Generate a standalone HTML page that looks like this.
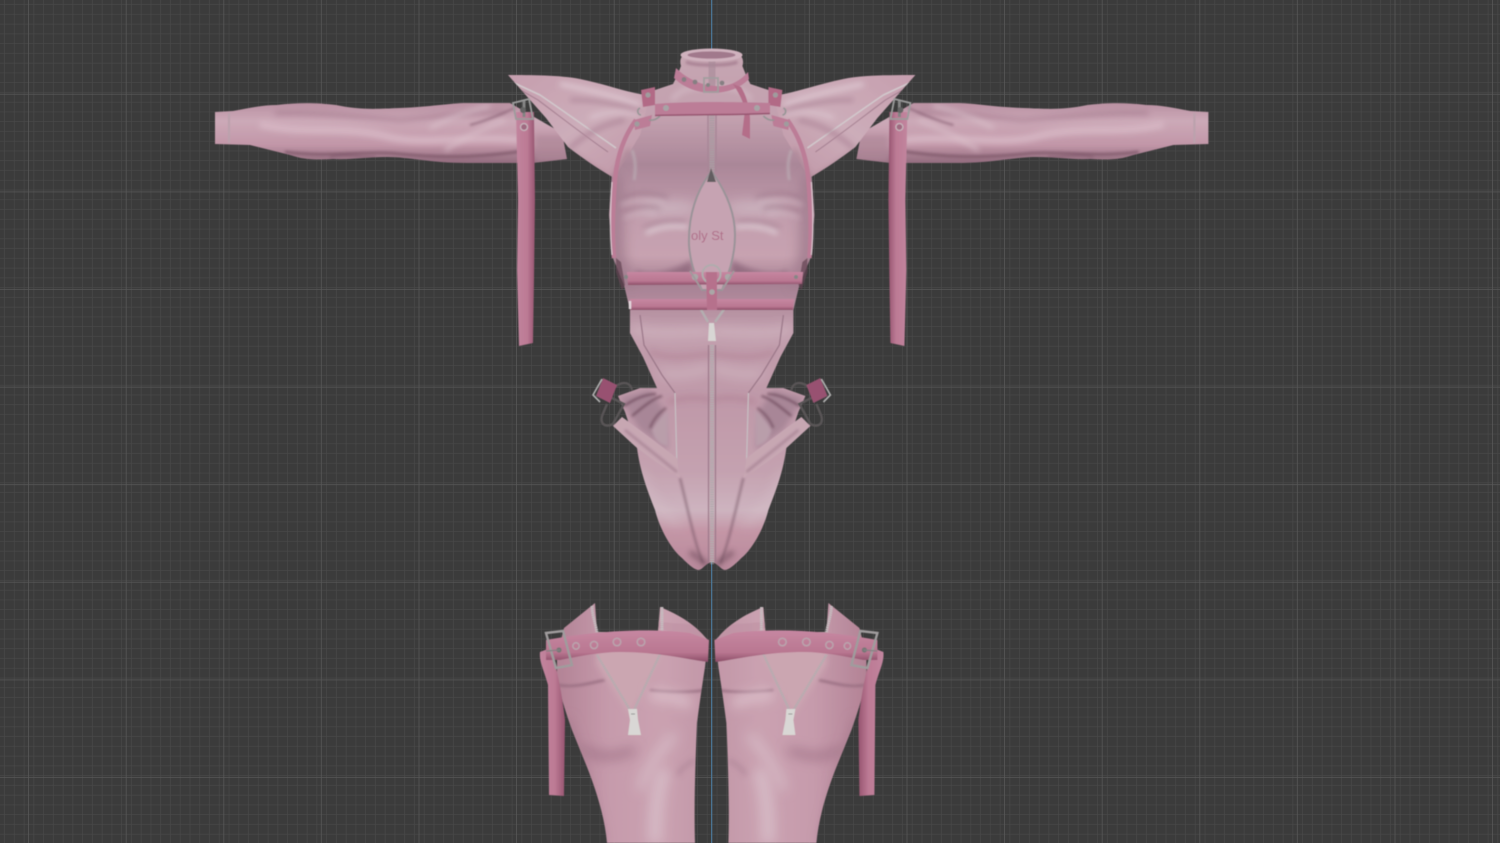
<!DOCTYPE html>
<html><head><meta charset="utf-8"><title>Viewport</title>
<style>html,body{margin:0;padding:0;background:#3b3b3b;width:1500px;height:843px;overflow:hidden}svg{display:block}</style></head>
<body>
<svg xmlns="http://www.w3.org/2000/svg" width="1500" height="843" viewBox="0 0 1500 843">
<defs>
<pattern id="gMinor" width="9.76" height="9.76" patternUnits="userSpaceOnUse" x="4.9" y="4.9"><path d="M9.76 0V9.76M0 9.76H9.76" stroke="#494949" stroke-width="1.300" fill="none"/></pattern>
<pattern id="gMajor" width="97.6" height="97.6" patternUnits="userSpaceOnUse" x="-68.6" y="-2.9"><path d="M97.6 0V97.6M0 97.6H97.6" stroke="#585858" stroke-width="1.500" fill="none"/></pattern>
<filter id="b1" filterUnits="userSpaceOnUse" x="0" y="0" width="1500" height="843"><feGaussianBlur stdDeviation="1.200"/></filter>
<filter id="b2" filterUnits="userSpaceOnUse" x="0" y="0" width="1500" height="843"><feGaussianBlur stdDeviation="2.800"/></filter>
<filter id="b3" filterUnits="userSpaceOnUse" x="0" y="0" width="1500" height="843"><feGaussianBlur stdDeviation="6"/></filter>
<filter id="soft" filterUnits="userSpaceOnUse" x="0" y="0" width="1500" height="843"><feGaussianBlur stdDeviation="0.6"/><feColorMatrix type="saturate" values="0.78"/><feComponentTransfer><feFuncR type="linear" slope="0.91"/><feFuncG type="linear" slope="0.91"/><feFuncB type="linear" slope="0.91"/></feComponentTransfer></filter>
<linearGradient id="armG" x1="0" y1="0" x2="0" y2="1"><stop offset="0" stop-color="#c994ab"/><stop offset=".3" stop-color="#dcaec1"/><stop offset=".7" stop-color="#d29ab1"/><stop offset="1" stop-color="#a06e86"/></linearGradient>
<linearGradient id="bodyG" gradientUnits="userSpaceOnUse" x1="0" y1="50" x2="0" y2="570">
  <stop offset="0" stop-color="#d6abbc"/><stop offset=".13" stop-color="#d2a5b8"/><stop offset=".22" stop-color="#b98ba2"/><stop offset=".32" stop-color="#d1a1b6"/><stop offset=".395" stop-color="#d8a7ba"/><stop offset=".45" stop-color="#b5849c"/><stop offset=".54" stop-color="#d1a2b6"/><stop offset=".68" stop-color="#cf9db2"/><stop offset=".81" stop-color="#d4a6b9"/><stop offset=".885" stop-color="#dcbac9"/><stop offset=".925" stop-color="#d599af"/><stop offset="1" stop-color="#c98ca4"/></linearGradient>
<linearGradient id="shG" x1="0" y1="0" x2="1" y2="1"><stop offset="0" stop-color="#d6a2b7"/><stop offset=".5" stop-color="#dcb2c3"/><stop offset="1" stop-color="#cf98ae"/></linearGradient>
<linearGradient id="bootG" x1="0" y1="0" x2="1" y2="0"><stop offset="0" stop-color="#c3859e"/><stop offset=".35" stop-color="#d79fb5"/><stop offset=".7" stop-color="#dba6ba"/><stop offset="1" stop-color="#d39bb1"/></linearGradient>
<linearGradient id="strapG" x1="0" y1="0" x2="1" y2="0"><stop offset="0" stop-color="#d585a8"/><stop offset=".6" stop-color="#cf7a9d"/><stop offset="1" stop-color="#a85278"/></linearGradient>
<linearGradient id="beltG" x1="0" y1="0" x2="0" y2="1"><stop offset="0" stop-color="#da88ab"/><stop offset=".7" stop-color="#cc7699"/><stop offset="1" stop-color="#9c4b6f"/></linearGradient>

<clipPath id="armC"><path d="M215,112 L233,111 C250,108 262,105 277,105 C300,102 320,103 336,105 C360,110 375,109 400,108 C430,107 450,103 467,103 L510,103 L562,133 L567,159 L533,163 L467,163 C430,163 410,157 387,157 C365,157 350,160 333,159 C315,160 305,160 290,155 L250,145 L215,144 Z"/></clipPath>
<clipPath id="shC"><path d="M508,75 C530,75 560,75 580,79 C605,84 625,92 650,96 L640,135 L614,178 C600,170 585,160 568,147 L546,118 Z"/></clipPath>
<clipPath id="bodyC"><path d="M712,50 L692,52 C681,53 679,60 681,66 L677,76 L673,84 L655,90 L640,96 L620,135 L612,172 L609,215 L613,258 L624,285 L630,310 L630,333 L643,357 L657,388 L640,388 L618,396 L625,412 L637,448 C640,470 646,487 655,510 C660,530 672,550 682,558 C690,566 695,570 699,570 C703,569 706,563 712,562 Z"/></clipPath>
<clipPath id="bootC"><path d="M595,603 L564,628 L557,655 L557,677 C560,695 565,710 572,730 L587,767 C598,795 605,820 607,843 L695,843 C694,810 695,770 697,723 C700,700 703,680 705,667 L708,640 L705,637 C695,625 680,615 660,607 L658,632 L597,632 Z"/></clipPath>

<g id="half">
  <!-- arm -->
  <path d="M215,112 L233,111 C250,108 262,105 277,105 C300,102 320,103 336,105 C360,110 375,109 400,108 C430,107 450,103 467,103 L510,103 L562,133 L567,159 L533,163 L467,163 C430,163 410,157 387,157 C365,157 350,160 333,159 C315,160 305,160 290,155 L250,145 L215,144 Z" fill="url(#armG)"/>
  <g clip-path="url(#armC)">
    <path d="M229,113V143" stroke="#c8a7b6" stroke-width="2.200" fill="none"/>
    <path d="M260,124 C300,135 340,125 385,136 C420,146 470,135 520,140" stroke="#e6bccd" stroke-width="7" fill="none" filter="url(#b2)"/>
    <path d="M275,113 C310,112 350,116 400,120 C430,118 460,112 505,112" stroke="#b37c96" stroke-width="4" fill="none" filter="url(#b2)" opacity=".7"/>
    <path d="M285,152 C330,158 370,150 400,154 C440,158 480,158 530,150" stroke="#8a5871" stroke-width="3" fill="none" filter="url(#b1)" opacity=".8"/>
    <path d="M430,128 C450,118 470,110 490,106 M445,150 C460,140 480,130 505,120" stroke="#e8c6d4" stroke-width="3" fill="none" filter="url(#b2)"/>
    <path d="M470,125 C490,120 505,112 515,108 M330,157 C345,153 355,157 375,157" stroke="#8a5771" stroke-width="2" fill="none" filter="url(#b1)" opacity=".65"/>
    <path d="M535,135 L568,135 L568,162 L535,163 Z" fill="#bc8aa0" opacity=".7" filter="url(#b2)"/>
  </g>
  <!-- body -->
  <path d="M712,50 L692,52 C681,53 679,60 681,66 L677,76 L673,84 L655,90 L640,96 L620,135 L612,172 L609,215 L613,258 L624,285 L630,310 L630,333 L643,357 L657,388 L640,388 L618,396 L625,412 L637,448 C640,470 646,487 655,510 C660,530 672,550 682,558 C690,566 695,570 699,570 C703,569 706,563 712,562 Z" fill="url(#bodyG)"/>
  <g clip-path="url(#bodyC)">
    <path d="M608,170 L622,180 L624,250 L632,290 L608,270 Z" fill="#a97a92" filter="url(#b3)" opacity=".8"/>
    <ellipse cx="668" cy="208" rx="30" ry="7" fill="#d9b9c8" filter="url(#b3)"/>
    <path d="M622,199 C632,192 650,192 668,197 M624,212 C636,206 650,206 660,208" stroke="#a07189" stroke-width="2.500" fill="none" filter="url(#b2)" opacity=".75"/>
    <path d="M621,205 C632,199 650,199 664,203 M624,218 C634,212 646,212 656,214" stroke="#e6cbd7" stroke-width="2.500" fill="none" filter="url(#b2)" opacity=".7"/>
    <path d="M644,228 C656,222 672,220 686,222" stroke="#9a6a83" stroke-width="2.500" fill="none" filter="url(#b2)" opacity=".6"/>
    <path d="M646,233 C658,227 672,225 688,227" stroke="#eedde5" stroke-width="3.500" fill="none" filter="url(#b2)"/>
    <path d="M636,270 C650,278 675,270 692,260 L692,276 L636,278 Z" fill="#a1708a" filter="url(#b2)"/>
    <path d="M686,62 C695,66 730,66 738,62" stroke="#b5829a" stroke-width="3" fill="none" filter="url(#b1)"/>
    <path d="M672,100 C680,88 695,86 712,88" stroke="#e4c5d2" stroke-width="3" fill="none" filter="url(#b2)"/>
    <path d="M632,328 C660,338 690,330 712,332 M660,372 C675,378 695,372 712,368" stroke="#e4c5d2" stroke-width="5" fill="none" filter="url(#b3)"/>
    <path d="M650,352 C670,360 690,356 712,354 M668,402 C685,397 700,397 712,400" stroke="#bf7f9a" stroke-width="6" fill="none" filter="url(#b2)" opacity=".45"/>
    <path d="M640,315 L644,345 L662,375 L675,393" stroke="#a97c92" stroke-width="1.300" fill="none"/>
    <path d="M632,150 C636,160 636,170 634,180" stroke="#c9c0c4" stroke-width="1.500" fill="none" filter="url(#b1)"/>
    <!-- gusset -->
    <path d="M620,398 L650,390 L664,410 L668,450 L640,430 Z" fill="#b68aa0" filter="url(#b2)"/>
    <path d="M624,406 C636,398 646,394 656,394 M632,416 C644,406 654,398 662,396" stroke="#7d4f66" stroke-width="2" fill="none" filter="url(#b1)" opacity=".9"/>
    <path d="M652,430 C656,422 664,414 668,410 L668,446 C660,445 654,440 652,430 Z" fill="#c7a3b4" filter="url(#b1)"/>
    <path d="M650,428 C654,418 660,412 666,408" stroke="#7d4f66" stroke-width="2" fill="none" filter="url(#b1)" opacity=".8"/>
    <path d="M680,478 C688,510 695,545 703,563" stroke="#7b5268" stroke-width="1.800" fill="none" filter="url(#b1)" opacity=".7"/>
    <path d="M675,393 L677,468" stroke="#d2c7cc" stroke-width="1.200" fill="none"/>
    <path d="M690,552 C696,556 702,560 708,566" stroke="#6f4459" stroke-width="5" fill="none" filter="url(#b2)" opacity=".6"/>
    <path d="M640,470 C650,505 660,510 680,525" stroke="#e9d3dd" stroke-width="6" fill="none" filter="url(#b3)" opacity=".5"/>
  </g>
  <!-- side leg strap -->
  <path d="M613,426 L622,417 C640,430 660,445 677,458 L680,478 C664,468 650,458 637,448 Z" fill="#d6abbc"/>
  <path d="M625,430 C642,444 660,458 677,472" stroke="#a07188" stroke-width="2" fill="none" filter="url(#b1)" opacity=".65"/>
  <!-- rings -->
  <g fill="none" stroke="#5e5a5c" stroke-width="2.400">
    <path d="M611,392 C618,381 630,380 632,390"/>
    <path d="M612,398 L624,404 L613,424 C605,428 600,424 602,416 L607,404"/>
  </g>
  <!-- buckle tab -->
  <path d="M603,378 L617,385 L610,403 L596,396 Z" fill="#aa4f79"/>
  <path d="M602,379 L593,395 L600,402" stroke="#b9b9b9" stroke-width="1.600" fill="none"/>
  <!-- shoulder -->
  <path d="M508,75 C530,75 560,75 580,79 C605,84 625,92 650,96 L640,135 L614,178 C600,170 585,160 568,147 L546,118 Z" fill="url(#shG)"/>
  <g clip-path="url(#shC)">
    <path d="M512,82 L540,95 C565,112 590,130 616,148" stroke="#dcd0d5" stroke-width="1.600" fill="none"/>
    <path d="M512,85 L538,100 C562,118 585,136 608,152" stroke="#a06e87" stroke-width="1.200" fill="none" opacity=".6"/>
    <path d="M560,84 C590,90 610,95 640,105" stroke="#ecd2dd" stroke-width="4" fill="none" filter="url(#b2)"/>
    <path d="M570,100 C590,100 615,102 640,112" stroke="#ba849d" stroke-width="3" fill="none" filter="url(#b2)"/>
    <path d="M570,148 C585,135 600,125 625,120" stroke="#bf8ba3" stroke-width="4" fill="none" filter="url(#b2)"/>
    <path d="M590,118 C605,112 620,110 640,115" stroke="#ecd2dd" stroke-width="3" fill="none" filter="url(#b2)"/>
    <path d="M560,148 L612,182 L630,150" stroke="#a97990" stroke-width="6" fill="none" filter="url(#b2)" opacity=".6"/>
  </g>
  <!-- hanging strap -->
  <path d="M516,112 L534,112 L535,200 L534,280 L533,343 L519,346 L517,270 L518,200 Z" fill="url(#strapG)"/>
  <path d="M513,103 L529,99 L533,119 L516,119 Z" fill="none" stroke="#a3a3a3" stroke-width="1.800"/>
  <path d="M524,101V117" stroke="#8a8a8a" stroke-width="3"/>
  <circle cx="524" cy="127" r="3.500" fill="#b06a89" stroke="#d3bcc5" stroke-width="1.300"/>
  <circle cx="523" cy="110" r="3" fill="#6a6a6a"/>
  <!-- harness side strap -->
  <path d="M636,120 C625,135 617,155 615,180 C613,205 612,235 614,258" stroke="#cf7da0" stroke-width="4.500" fill="none"/>
  <path d="M612,182 C610,210 610,235 612,255" stroke="#e8ccd8" stroke-width="1.300" fill="none"/>
  <path d="M634,120 L652,115 L650,126 L635,130 Z" fill="#cf7da0"/>
  <circle cx="637" cy="124" r="2.600" fill="#a8a3a5"/>
  <path d="M641,90 L655,87 L655,105 L643,107 Z" fill="#c6678f"/>
  <circle cx="648" cy="95" r="2.600" fill="#a8a3a5"/>
  <path d="M640,108 C636,110 638,115 641,115 M649,120 C654,121 658,118 660,116" stroke="#9c9c9c" stroke-width="1.600" fill="none"/>
  <path d="M616,258 L621,262 L625,285 L622,290 L616,272 Z" fill="#6d4558" opacity=".7"/>
</g>

<g id="bootHalf">
  <path d="M595,603 L564,628 L557,655 L557,677 C560,695 565,710 572,730 L587,767 C598,795 605,820 607,843 L695,843 C694,810 695,770 697,723 C700,700 703,680 705,667 L708,640 L705,637 C695,625 680,615 660,607 L658,632 L597,632 Z" fill="url(#bootG)"/>
  <g clip-path="url(#bootC)">
    <path d="M558,685 C575,688 590,683 605,680 M650,690 C665,692 690,693 705,690" stroke="#a46d87" stroke-width="2.200" fill="none" filter="url(#b1)"/>
    <path d="M596,664 L630,715 L662,655 L660,620 L598,620 Z" fill="#dcaaba" filter="url(#b2)"/>
    <path d="M580,748 C600,760 615,757 635,750" stroke="#ab6f8b" stroke-width="6" fill="none" filter="url(#b3)"/>
    <path d="M650,695 C670,695 685,700 690,705" stroke="#ecc8d6" stroke-width="9" fill="none" filter="url(#b3)"/>
    <path d="M640,790 C645,770 660,750 675,735" stroke="#e6c3d2" stroke-width="7" fill="none" filter="url(#b3)"/>
    <path d="M655,843 C655,800 660,780 665,770" stroke="#e6c3d2" stroke-width="12" fill="none" filter="url(#b3)"/>
    <path d="M695,760 C685,765 680,770 678,775" stroke="#b9849d" stroke-width="4" fill="none" filter="url(#b2)" opacity=".7"/>
    <path d="M600,843 C590,800 575,750 565,720" stroke="#b57a94" stroke-width="8" fill="none" filter="url(#b3)"/>
    <path d="M630,620 L700,625 L705,640 L665,630 Z" fill="#cd92a9" opacity=".5"/>
  </g>
  <!-- teeth -->
  <path d="M592,606 C592,615 596,625 597,632" stroke="#cfc7ca" stroke-width="2.800" fill="none" stroke-dasharray="1.500 .6"/>
  <path d="M662,607 L662,633" stroke="#cfc7ca" stroke-width="2.800" fill="none" stroke-dasharray="1.500 .6"/>
  <path d="M597,655 L630,710 M661,652 L634,710" stroke="#bdb5b8" stroke-width="2.400" fill="none" stroke-dasharray="1.500 .6"/>
  <path d="M628,709 L637,709 L638,720 L641,735 L628,735 L630,720 Z" fill="#e3e1dd"/>
  <path d="M631,714 L635,714" stroke="#9a9a9a" stroke-width="1"/>
  <!-- hanging strap -->
  <path d="M540,652 C539,662 544,670 548,685 L549,795 L564,796 L565,720 C562,695 558,670 550,648 Z" fill="url(#strapG)"/>
  <!-- belt -->
  <path d="M546,640 C600,630 650,628 690,633 L709,640 L708,662 C690,660 660,652 620,652 C600,652 580,656 560,660 L546,660 Z" fill="url(#beltG)"/>
  <g fill="none" stroke="#c6aab6" stroke-width="1.500">
    <circle cx="576" cy="646" r="3.200"/><circle cx="594" cy="645" r="3.600"/><circle cx="617" cy="642" r="3.800"/><circle cx="641" cy="642" r="3.800"/>
  </g>
  <path d="M546,633 L563,631 L572,665 L556,668 Z" fill="none" stroke="#a7a3a4" stroke-width="2.400"/>
  <circle cx="559" cy="650" r="2.600" fill="#7d7d7d"/>
  <path d="M560,650L546,651" stroke="#8a8a8a" stroke-width="1.200"/>
</g>
</defs>

<rect width="1500" height="843" fill="#3b3b3b"/>
<rect width="1500" height="843" fill="url(#gMinor)"/>
<rect width="1500" height="843" fill="url(#gMajor)"/>
<path d="M711.7 0V843" stroke="#4c7fa6" stroke-width="1"/>

<g filter="url(#soft)">
  <use href="#half"/>
  <use href="#half" transform="translate(1423.4,0) scale(-1,1)"/>
  <!-- chest opening -->
  <path d="M711,172 C697,190 688,215 689,245 C690,262 696,278 702,290 L722,290 C728,275 735,258 735,235 C735,212 725,190 712,172 Z" fill="#d6a8bb" stroke="#a39aa0" stroke-width="2"/>
  <text x="691" y="240" font-family="'Liberation Sans',sans-serif" font-size="13" fill="#c26d92">oly St</text>
  <!-- zipper -->
  <path d="M708,115 V172 M716,115 V172" stroke="#b58ba0" stroke-width="1.500"/>
  <path d="M712,115 V172" stroke="#b5a3ab" stroke-width="5" stroke-dasharray="1.600 .8"/>
  <path d="M712,52 V90" stroke="#b48ea1" stroke-width="7" opacity=".6"/>
  <path d="M711,168 L707,182 L716,182 Z" fill="#696265"/>
  <path d="M712,345 V564" stroke="#bdb3b7" stroke-width="4" stroke-dasharray="1.600 .8"/>
  <path d="M708.500,345 V562 M715.500,345 V562" stroke="#a97c92" stroke-width="1.200"/>
  <path d="M709,323 L714,323 L716,341 L708,341 Z" fill="#e2dfdc"/>
  <path d="M700,308 L708,322 M725,308 L715,322" stroke="#bdb5b8" stroke-width="2.500"/>
  <!-- neck ring -->
  <ellipse cx="711.500" cy="55" rx="31" ry="6.500" fill="#dfb8c8"/>
  <ellipse cx="711.500" cy="55" rx="24" ry="3.600" fill="#b07c94"/>
  <!-- collar -->
  <path d="M676,68 C688,80 705,87 722,86 C733,85 742,79 748,72 L749,79 C740,88 730,92 714,93 C698,93 684,88 674,78 Z" fill="#cf7da0"/>
  <g fill="#8e8589"><circle cx="684" cy="79.500" r="2.400"/><circle cx="695" cy="82" r="2.400"/><circle cx="722" cy="83" r="2.400"/></g>
  <path d="M704,78 H718 V92 H704 Z" fill="none" stroke="#a9a5a6" stroke-width="1.800"/>
  <circle cx="708" cy="85" r="2" fill="#8a8a8a"/>
  <path d="M733,84 L741,87 C746,95 749,105 750,118 L750,139 L742,135 L745,110 C743,100 738,92 733,84 Z" fill="#c76c92"/>
  <!-- chest strap -->
  <path d="M655,104 C690,101 735,102 770,103 L770,114 C735,116 690,115 655,116 Z" fill="#cf7da0"/>
  <path d="M655,115.500 C690,114.500 735,115 770,113.500" stroke="#a85278" stroke-width="1.500" fill="none"/>
  <circle cx="666" cy="108" r="3" fill="#b0abad"/><circle cx="757" cy="108" r="3" fill="#b0abad"/>
  <!-- waist bands -->
  <path d="M627,272 L803,272 L802,284 L628,285 Z" fill="url(#beltG)"/>
  <path d="M630,299 L794,299 L793,310 L630,310 Z" fill="url(#beltG)"/>
  <path d="M630,301 V309" stroke="#f0dfe6" stroke-width="2.500"/>
  <circle cx="695" cy="277" r="3.200" fill="#b3aeaf"/><circle cx="728" cy="277" r="3.200" fill="#b3aeaf"/>
  <circle cx="626" cy="277" r="2" fill="#8d8d8d"/><circle cx="796" cy="277" r="2" fill="#8d8d8d"/>
  <circle cx="711.500" cy="274" r="9" fill="none" stroke="#b9b3b5" stroke-width="2"/>
  <path d="M706,272 H717 V310 H707 Z" fill="#c96f94"/>
  <path d="M702,290 L690,271 M722,290 L734,271" stroke="#a9a0a4" stroke-width="1.800"/>
  <circle cx="712" cy="292" r="2.800" fill="#b3aeaf"/>
  <!-- boots -->
  <use href="#bootHalf"/>
  <use href="#bootHalf" transform="translate(1423.4,0) scale(-1,1)"/>
</g>
</svg>
</body></html>
